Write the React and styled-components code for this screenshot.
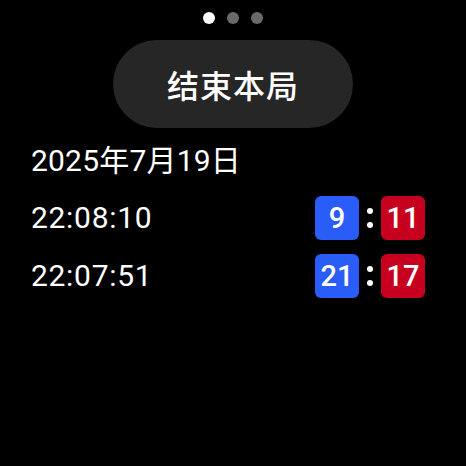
import React from 'react';
import styled, { createGlobalStyle } from 'styled-components';

const GlobalStyle = createGlobalStyle`
  html, body {
    margin: 0;
    padding: 0;
    background: #000;
  }
  body {
    font-family: Roboto, "Noto Sans CJK SC", sans-serif;
    color: #fff;
  }
`;

const Screen = styled.div`
  width: 466px;
  height: 466px;
  background: #000;
  display: flex;
  flex-direction: column;
  align-items: center;
  box-sizing: border-box;
  padding-top: 12px;
  overflow: hidden;
`;

const Pager = styled.div`
  display: flex;
  gap: 12px;
  height: 12px;
`;

const Dot = styled.span`
  width: 12px;
  height: 12px;
  border-radius: 50%;
  background: ${props => (props.active ? '#ffffff' : '#6a6a6a')};
`;

const EndButton = styled.button`
  margin-top: 16px;
  width: 240px;
  height: 88px;
  border: none;
  border-radius: 44px;
  background: #262626;
  color: #fff;
  font-family: "Noto Sans CJK SC", sans-serif;
  font-size: 32px;
  font-weight: 500;
  letter-spacing: 1px;
  padding: 0;
`;

const Records = styled.div`
  width: 100%;
  box-sizing: border-box;
  padding: 0 41px 0 31px;
  margin-top: 13px;
  display: flex;
  flex-direction: column;
`;

const DateLine = styled.div`
  height: 40px;
  line-height: 40px;
  font-size: 30px;
  letter-spacing: 0.2px;
  margin-bottom: 15px;
`;

const List = styled.div`
  display: flex;
  flex-direction: column;
  gap: 14px;
`;

const Row = styled.div`
  height: 44px;
  display: flex;
  align-items: center;
  justify-content: space-between;
`;

const Time = styled.span`
  font-size: 30px;
  letter-spacing: 0.7px;
  line-height: 44px;
`;

const Score = styled.div`
  display: flex;
  align-items: center;
`;

const ScoreBox = styled.span`
  width: 44px;
  height: 44px;
  border-radius: 6px;
  background: ${props => (props.side === 'blue' ? '#2a5cf8' : '#c8001f')};
  display: flex;
  align-items: center;
  justify-content: center;
  font-size: 29px;
  font-weight: 500;
  line-height: 1;
`;

const Separator = styled.span`
  width: 22px;
  height: 44px;
  display: flex;
  flex-direction: column;
  align-items: center;
  justify-content: center;
  gap: 8px;
  &::before,
  &::after {
    content: '';
    width: 6px;
    height: 6px;
    border-radius: 50%;
    background: #fff;
  }
`;

const records = [
  { time: '22:08:10', blue: 9, red: 11 },
  { time: '22:07:51', blue: 21, red: 17 },
];

const App = () => (
  <>
    <GlobalStyle />
    <Screen>
      <Pager>
        <Dot active />
        <Dot />
        <Dot />
      </Pager>
      <EndButton>结束本局</EndButton>
      <Records>
        <DateLine>2025年7月19日</DateLine>
        <List>
          {records.map(r => (
            <Row key={r.time}>
              <Time>{r.time}</Time>
              <Score>
                <ScoreBox side="blue">{r.blue}</ScoreBox>
                <Separator />
                <ScoreBox side="red">{r.red}</ScoreBox>
              </Score>
            </Row>
          ))}
        </List>
      </Records>
    </Screen>
  </>
);

export default App;
